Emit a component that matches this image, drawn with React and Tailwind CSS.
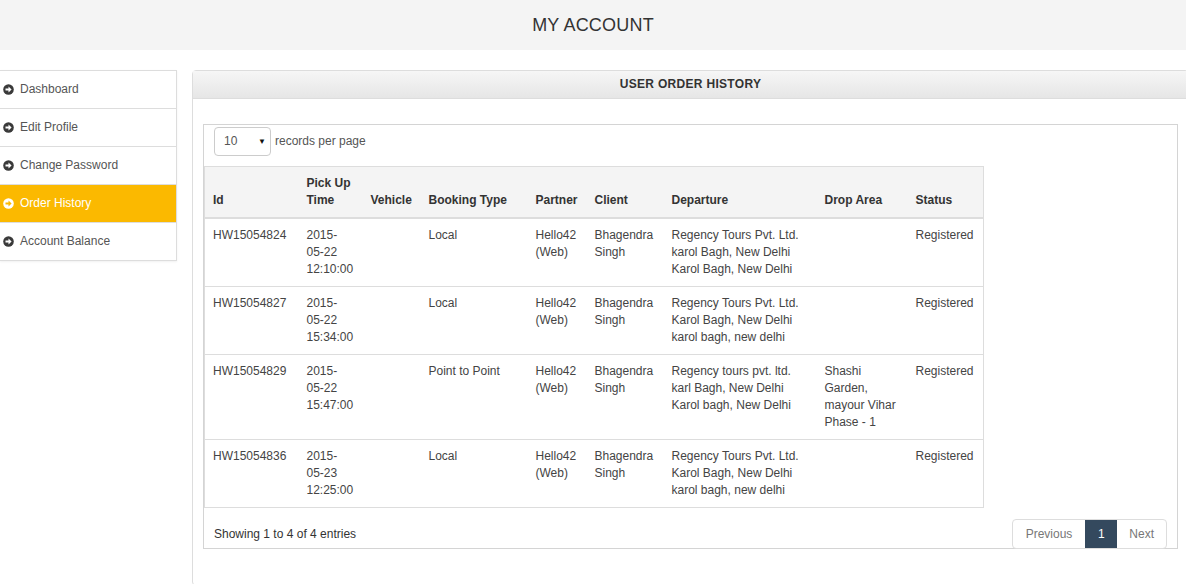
const menu = [
  { label: "Dashboard" },
  { label: "Edit Profile" },
  { label: "Change Password" },
  { label: "Order History", active: true },
  { label: "Account Balance" },
];

const columns = [
  { key: "id", label: ["Id"], width: "w-[94px]" },
  { key: "pickup", label: ["Pick Up", "Time"], width: "w-[64px]" },
  { key: "vehicle", label: ["Vehicle"], width: "w-[58px]" },
  { key: "booking", label: ["Booking Type"], width: "w-[107px]" },
  { key: "partner", label: ["Partner"], width: "w-[59px]" },
  { key: "client", label: ["Client"], width: "w-[77px]" },
  { key: "departure", label: ["Departure"], width: "w-[153px]" },
  { key: "drop", label: ["Drop Area"], width: "w-[91px]" },
  { key: "status", label: ["Status"], width: "w-[76px]" },
];

const orders = [
  {
    id: ["HW15054824"],
    pickup: ["2015-", "05-22", "12:10:00"],
    vehicle: [],
    booking: ["Local"],
    partner: ["Hello42", "(Web)"],
    client: ["Bhagendra", "Singh"],
    departure: ["Regency Tours Pvt. Ltd.", "karol Bagh, New Delhi", "Karol Bagh, New Delhi"],
    drop: [],
    status: ["Registered"],
  },
  {
    id: ["HW15054827"],
    pickup: ["2015-", "05-22", "15:34:00"],
    vehicle: [],
    booking: ["Local"],
    partner: ["Hello42", "(Web)"],
    client: ["Bhagendra", "Singh"],
    departure: ["Regency Tours Pvt. Ltd.", "Karol Bagh, New Delhi", "karol bagh, new delhi"],
    drop: [],
    status: ["Registered"],
  },
  {
    id: ["HW15054829"],
    pickup: ["2015-", "05-22", "15:47:00"],
    vehicle: [],
    booking: ["Point to Point"],
    partner: ["Hello42", "(Web)"],
    client: ["Bhagendra", "Singh"],
    departure: ["Regency tours pvt. ltd.", "karl Bagh, New Delhi", "Karol bagh, New Delhi"],
    drop: ["Shashi", "Garden,", "mayour Vihar", "Phase - 1"],
    status: ["Registered"],
  },
  {
    id: ["HW15054836"],
    pickup: ["2015-", "05-23", "12:25:00"],
    vehicle: [],
    booking: ["Local"],
    partner: ["Hello42", "(Web)"],
    client: ["Bhagendra", "Singh"],
    departure: ["Regency Tours Pvt. Ltd.", "Karol Bagh, New Delhi", "karol bagh, new delhi"],
    drop: [],
    status: ["Registered"],
  },
];

// font-awesome style "arrow-circle-right"
const ArrowCircle = ({ active }) => (
  <svg width="11" height="11" viewBox="0 0 11 11" className="shrink-0">
    <circle cx="5.5" cy="5.5" r="5.3" fill={active ? "#ffffff" : "#3a3a3a"} />
    <path
      d="M2.5 4.5h3V2.6L8.6 5.5 5.5 8.4V6.5h-3z"
      fill={active ? "#fbb900" : "#ffffff"}
    />
  </svg>
);

const Lines = ({ lines }) =>
  lines.map((line, i) => (
    <span key={i} className="block">
      {line}
    </span>
  ));

const App = () => {
  return (
    <div className="w-full overflow-hidden bg-white font-['Liberation_Sans',Arial,sans-serif] text-[12px] leading-[17px] text-[#444]">
      <header className="flex h-[50px] items-center justify-center bg-[#f4f4f4]">
        <h1 className="text-[18px] font-normal tracking-[0.2px] text-[#333]">MY ACCOUNT</h1>
      </header>

      <div className="flex items-start pt-[20px]">
        <nav className="w-[177px] shrink-0 border-y border-r border-[#ddd] bg-white shadow-[0_1px_2px_rgba(0,0,0,0.06)]">
          {menu.map((item, i) => (
            <div
              key={item.label}
              className={`flex items-center gap-[6px] pl-[3px] ${
                i < menu.length - 1 ? "h-[38px] border-b border-[#ddd]" : "h-[37px]"
              } ${i === 0 ? "h-[37px]" : ""} ${item.active ? "bg-[#fbb900] text-white" : "text-[#555]"}`}
            >
              <ArrowCircle active={item.active} />
              <span>{item.label}</span>
            </div>
          ))}
        </nav>

        <section className="ml-[15px] h-[516px] w-[997px] shrink-0 rounded-[4px] border border-[#ddd] bg-white">
          <div className="flex h-[28px] items-center justify-center border-b border-[#ddd] bg-gradient-to-b from-[#f6f6f6] to-[#e6e6e6]">
            <h2 className="text-[12px] font-bold tracking-[0.3px] text-[#333]">USER ORDER HISTORY</h2>
          </div>

          <div className="px-[10px] pt-[25px]">
            <div className="border border-[#d4d4d4]">
              <div className="flex items-center gap-[4px] px-[10px] pt-[2px]">
                <div className="flex h-[29px] w-[57px] items-center justify-between rounded-[4px] border border-[#ccc] pl-[9px] pr-[4px] text-[#555]">
                  <span>10</span>
                  <span className="text-[8px] text-[#111]">▼</span>
                </div>
                <span className="text-[#555]">records per page</span>
              </div>

              <table className="mt-[10px] w-[779px] table-fixed border border-[#ddd]">
                <thead>
                  <tr className="bg-[#f4f4f4]">
                    {columns.map((col) => (
                      <th
                        key={col.key}
                        className={`${col.width} border-b-2 border-[#ddd] p-[8px] text-left align-bottom font-bold text-[#333]`}
                      >
                        <Lines lines={col.label} />
                      </th>
                    ))}
                  </tr>
                </thead>
                <tbody>
                  {orders.map((order, r) => (
                    <tr key={order.id[0]} className={r > 0 ? "border-t border-[#ddd]" : ""}>
                      {columns.map((col) => (
                        <td key={col.key} className="p-[8px] align-top text-[#444]">
                          <Lines lines={order[col.key]} />
                        </td>
                      ))}
                    </tr>
                  ))}
                </tbody>
              </table>

              <div className="mt-[11px] -mb-[1px] flex items-center justify-between px-[10px]">
                <p className="text-[#333]">Showing 1 to 4 of 4 entries</p>
                <div className="flex h-[30px] overflow-hidden rounded-[4px] border border-[#ddd] text-[#777]">
                  <span className="flex items-center px-[13px]">Previous</span>
                  <span className="flex w-[32px] items-center justify-center bg-[#34495e] text-white">1</span>
                  <span className="flex items-center px-[12px]">Next</span>
                </div>
              </div>
            </div>
          </div>
        </section>
      </div>
    </div>
  );
};

export default App;
